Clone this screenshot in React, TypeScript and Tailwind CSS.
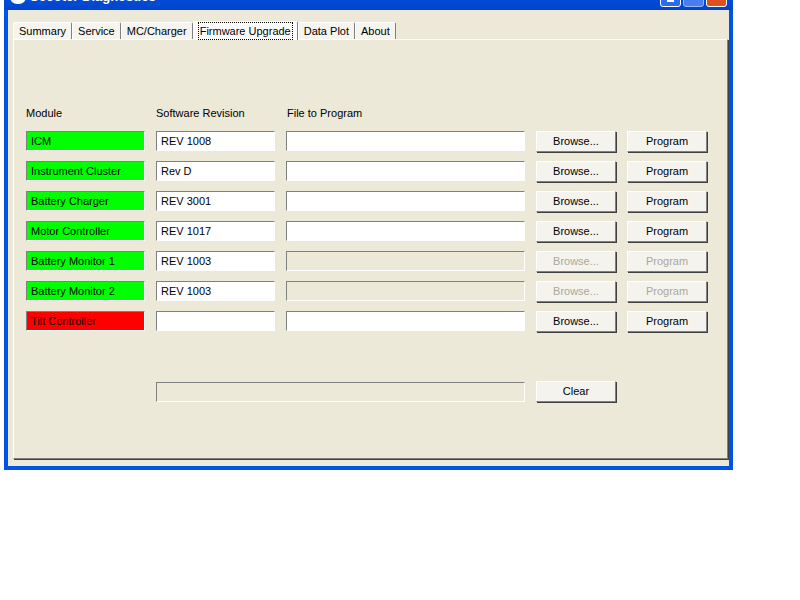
const rows = [
  { name: 'ICM', rev: 'REV 1008', ok: true, enabled: true },
  { name: 'Instrument Cluster', rev: 'Rev D', ok: true, enabled: true },
  { name: 'Battery Charger', rev: 'REV 3001', ok: true, enabled: true },
  { name: 'Motor Controller', rev: 'REV 1017', ok: true, enabled: true },
  { name: 'Battery Monitor 1', rev: 'REV 1003', ok: true, enabled: false },
  { name: 'Battery Monitor 2', rev: 'REV 1003', ok: true, enabled: false },
  { name: 'Tilt Controller', rev: '', ok: false, enabled: true },
]

const tabs = ['Summary', 'Service', 'MC/Charger', 'Firmware Upgrade', 'Data Plot', 'About']

function Btn({ label, enabled = true }: { label: string; enabled?: boolean }) {
  return (
    <div
      className={`w-[80px] h-[21px] flex items-center justify-center bg-[#f4f3ee] border border-t-white border-l-white border-r-[#808080] border-b-[#808080] shadow-[1px_1px_0_#404040] ${enabled ? 'text-black' : 'text-[#aca899]'}`}
    >
      {label}
    </div>
  )
}

function Field({ w, text, bg = 'bg-white' }: { w: string; text?: string; bg?: string }) {
  return (
    <div className={`${w} h-[20px] ${bg} border border-t-[#808080] border-l-[#808080] border-r-white border-b-white flex items-center pl-1`}>
      {text}
    </div>
  )
}

export default function App() {
  return (
    <div className="w-[800px] h-[600px] bg-white overflow-hidden text-[11px] text-black" style={{ fontFamily: '"Liberation Sans", Arial, sans-serif' }}>
      <div className="ml-[4px] mt-[-20px] w-[729px] bg-[#0054e3] rounded-t-[6px] flex flex-col">
        <div className="h-[30px] flex items-center justify-between px-[6px] bg-gradient-to-b from-[#0a5ce8] to-[#0044cc]">
          <div className="flex items-center gap-1 pt-[4px]">
            <div className="w-[16px] h-[14px] rounded-full bg-white flex items-center justify-center text-[9px] font-bold text-black">V</div>
            <span className="text-white font-bold text-[13px]">Scooter Diagnostics</span>
          </div>
          <div className="flex gap-[2px] pt-[2px]">
            <div className="w-[21px] h-[21px] rounded-[3px] border border-white bg-[#2a6bf0] flex items-end justify-center pb-[4px]"><div className="w-[7px] h-[3px] bg-white" /></div>
            <div className="w-[21px] h-[21px] rounded-[3px] border border-[#9cb6f5] bg-[#4a7ef0]" />
            <div className="w-[21px] h-[21px] rounded-[3px] border border-white bg-[#e0501e] text-white flex items-center justify-center font-bold text-[13px]">✕</div>
          </div>
        </div>
        <div className="mx-[4px] mb-[4px] bg-[#ece9d8] h-[456px] pl-[5px] pr-[1px] pt-[10px]">
          <div className="flex items-end h-[19px]">
            {tabs.map((t, i) => {
              const sel = i === 3
              return (
                <div
                  key={t}
                  className={`px-[5px] flex items-center border-t border-l border-white border-r border-r-[#808080] rounded-t-[2px] ${sel ? 'h-[19px] bg-[#fcfcfe] -mb-px z-10' : 'h-[17px] bg-[#f5f4ee]'}`}
                >
                  <span className={sel ? 'outline outline-1 outline-dotted outline-black px-[1px]' : ''}>{t}</span>
                </div>
              )
            })}
          </div>
          <div className="h-[420px] bg-[#ece9d8] border border-t-white border-l-white border-r-[#808080] border-b-[#808080] shadow-[1px_1px_0_#404040] pl-[12px] pt-[65px]">
            <div className="flex h-[16px] items-center">
              <span className="w-[130px]">Module</span>
              <span className="w-[131px]">Software Revision</span>
              <span>File to Program</span>
            </div>
            <div className="flex flex-col gap-[10px] mt-[10px]">
              {rows.map(r => (
                <div key={r.name} className="flex items-center gap-[11px] h-[20px]">
                  <Field w="w-[119px]" text={r.name} bg={r.ok ? 'bg-[#00ff00]' : 'bg-[#ff0000]'} />
                  <Field w="w-[119px]" text={r.rev} />
                  <Field w="w-[239px]" bg={r.enabled ? 'bg-white' : 'bg-[#ece9d8]'} />
                  <Btn label="Browse..." enabled={r.enabled} />
                  <Btn label="Program" enabled={r.enabled} />
                </div>
              ))}
            </div>
            <div className="flex items-center gap-[11px] mt-[50px] pl-[130px]">
              <Field w="w-[369px]" bg="bg-[#ece9d8]" />
              <Btn label="Clear" />
            </div>
          </div>
        </div>
      </div>
    </div>
  )
}
